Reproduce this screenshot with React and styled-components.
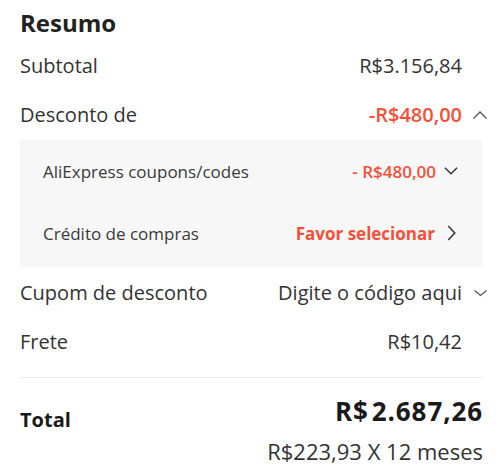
import React from "react";
import styled, { createGlobalStyle } from "styled-components";

const Global = createGlobalStyle`
  html, body { margin: 0; padding: 0; background: #fff; }
  body { font-family: "Open Sans", "Liberation Sans", sans-serif; color: #333; }
`;

const Wrap = styled.div`
  width: 500px;
  box-sizing: border-box;
  padding: 7px 17px 0 20px;
`;

const Title = styled.h2`
  margin: 0 0 2px;
  font-size: 24px;
  line-height: 32px;
  font-weight: 700;
  color: #222;
`;

const Row = styled.div`
  display: grid;
  grid-template-columns: 1fr auto 28px;
  align-items: center;
  height: 49px;
  margin-right: -7px;
  font-size: 20px;
  line-height: 49px;
  color: #333;
`;

const Value = styled.span`
  color: ${(p) => (p.$red ? "#f4513a" : "#333")};
  font-weight: ${(p) => (p.$red ? 600 : 400)};
`;

const IconSlot = styled.span`
  display: flex;
  align-items: center;
  justify-content: flex-end;
  padding-right: 2px;
  color: #555;
`;

const Panel = styled.div`
  background: #f7f7f7;
  margin: 1px 0 1px;
  padding: 0 25px 3px 23px;
`;

const PanelRow = styled.div`
  display: flex;
  align-items: center;
  height: 62px;
  font-size: 17px;
  color: #3a3a3a;
`;

const PanelLabel = styled.span`
  flex: 1;
`;

const PanelValue = styled.span`
  color: #f4513a;
  font-weight: ${(p) => (p.$bold ? 700 : 600)};
`;

const PanelIcon = styled.span`
  display: flex;
  align-items: center;
  justify-content: center;
  width: 14px;
  margin-left: ${(p) => p.$ml || 8}px;
  color: #333;
`;

const Divider = styled.hr`
  border: 0;
  border-top: 1px solid #ececec;
  margin: 11px 0 0;
`;

const TotalBlock = styled.div`
  display: flex;
  justify-content: space-between;
  align-items: flex-start;
  padding-top: 16px;
`;

const TotalLabel = styled.span`
  font-size: 20px;
  font-weight: 700;
  color: #1a1a1a;
  line-height: 51px;
`;

const TotalRight = styled.div`
  display: flex;
  flex-direction: column;
  align-items: flex-end;
`;

const BigTotal = styled.span`
  font-size: 26px;
  font-weight: 700;
  color: #1a1a1a;
  line-height: 34px;
  letter-spacing: 0.9px;
`;

const Cur = styled.span`
  margin-right: 3px;
`;

const Installments = styled.span`
  margin-top: 8px;
  font-size: 22px;
  color: #333;
  line-height: 30px;
`;

const ChevronUp = () => (
  <svg width="16" height="10" viewBox="0 0 16 10" fill="none">
    <path d="M1.5 8.5 L8 2 L14.5 8.5" stroke="#555" strokeWidth="1.4" />
  </svg>
);

const ChevronDownSmall = () => (
  <svg width="15" height="8" viewBox="0 0 15 8" fill="none">
    <path d="M1.5 1.5 L7.5 6.5 L13.5 1.5" stroke="#555" strokeWidth="1.2" />
  </svg>
);

const ChevronDown = () => (
  <svg width="15" height="10" viewBox="0 0 15 10" fill="none">
    <path d="M1 1.5 L7.5 8 L14 1.5" stroke="#333" strokeWidth="1.5" />
  </svg>
);

const ChevronRight = () => (
  <svg width="9" height="16" viewBox="0 0 9 16" fill="none">
    <path d="M1.2 1 L7.8 8 L1.2 15" stroke="#333" strokeWidth="1.5" />
  </svg>
);

export default function App() {
  return (
    <>
      <Global />
      <Wrap>
        <Title>Resumo</Title>
        <Row>
          <span>Subtotal</span>
          <Value>R$3.156,84</Value>
          <IconSlot />
        </Row>
        <Row>
          <span>Desconto de</span>
          <Value $red>-R$480,00</Value>
          <IconSlot>
            <ChevronUp />
          </IconSlot>
        </Row>
        <Panel>
          <PanelRow>
            <PanelLabel>AliExpress coupons/codes</PanelLabel>
            <PanelValue>- R$480,00</PanelValue>
            <PanelIcon>
              <ChevronDown />
            </PanelIcon>
          </PanelRow>
          <PanelRow>
            <PanelLabel>Crédito de compras</PanelLabel>
            <PanelValue $bold>Favor selecionar</PanelValue>
            <PanelIcon $ml={9}>
              <ChevronRight />
            </PanelIcon>
          </PanelRow>
        </Panel>
        <Row>
          <span>Cupom de desconto</span>
          <Value>Digite o código aqui</Value>
          <IconSlot>
            <ChevronDownSmall />
          </IconSlot>
        </Row>
        <Row>
          <span>Frete</span>
          <Value>R$10,42</Value>
          <IconSlot />
        </Row>
        <Divider />
        <TotalBlock>
          <TotalLabel>Total</TotalLabel>
          <TotalRight>
            <BigTotal>
              <Cur>R$</Cur>2.687,26
            </BigTotal>
            <Installments>R$223,93 X 12 meses</Installments>
          </TotalRight>
        </TotalBlock>
      </Wrap>
    </>
  );
}
